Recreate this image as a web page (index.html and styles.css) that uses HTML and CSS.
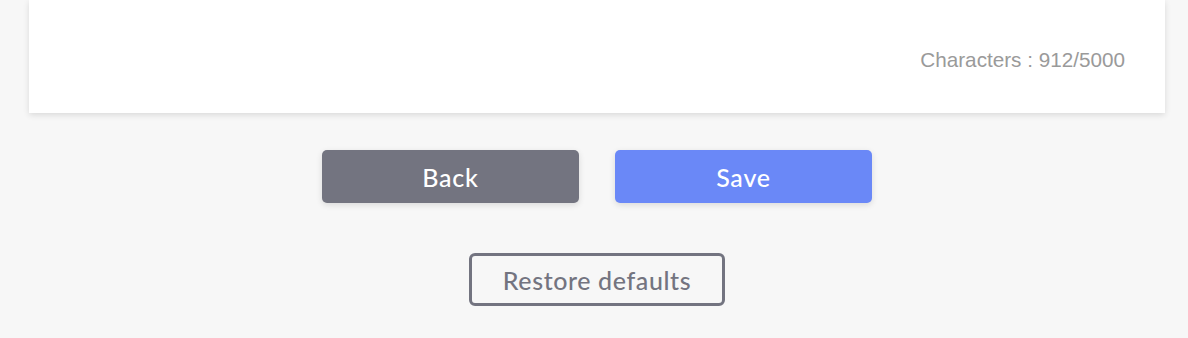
FILE: index.html
```html
<!DOCTYPE html>
<html>
<head>
<meta charset="utf-8">
<link rel="stylesheet" href="styles.css">
</head>
<body>
<div class="page">
  <div class="card">
    <div class="counter">Characters : 912/5000</div>
  </div>
  <div class="actions">
    <button class="btn btn-back">Back</button>
    <button class="btn btn-save">Save</button>
  </div>
  <div class="restore-row">
    <button class="btn-restore">Restore defaults</button>
  </div>
</div>
</body>
</html>
```
FILE: styles.css
```css
html, body {
  margin: 0;
  padding: 0;
  background: #f7f7f7;
}
.page {
  width: 1136px;
  margin: 0 0 0 29px;
  display: flex;
  flex-direction: column;
  align-items: center;
}
.card {
  align-self: stretch;
  height: 113px;
  background: #ffffff;
  box-shadow: 0 2px 6px rgba(0,0,0,0.12);
  display: flex;
  justify-content: flex-end;
  box-sizing: border-box;
  padding: 46px 40px 0 0;
}
.counter {
  font-family: "Liberation Sans", Arial, sans-serif;
  font-size: 20.7px;
  color: #9a9a9a;
  line-height: 28px;
  height: 28px;
}
.actions {
  display: flex;
  gap: 36px;
  margin-top: 37px;
}
.btn {
  width: 257px;
  height: 53px;
  border: none;
  border-radius: 5px;
  color: #ffffff;
  font-family: "Lato", "Noto Sans", sans-serif;
  font-size: 25px;
  font-weight: 500;
  letter-spacing: 0.8px;
  box-shadow: 0 2px 6px rgba(0,0,0,0.12);
  padding: 0;
}
.btn-back { background: #737480; }
.btn-save { background: #6a88f7; }
.restore-row {
  margin-top: 50px;
}
.btn-restore {
  width: 256px;
  height: 53px;
  background: transparent;
  border: 3px solid #737480;
  border-radius: 6px;
  color: #737480;
  font-family: "Lato", "Noto Sans", sans-serif;
  font-size: 25px;
  font-weight: 500;
  letter-spacing: 0.6px;
  padding: 0;
  box-sizing: border-box;
}
```
